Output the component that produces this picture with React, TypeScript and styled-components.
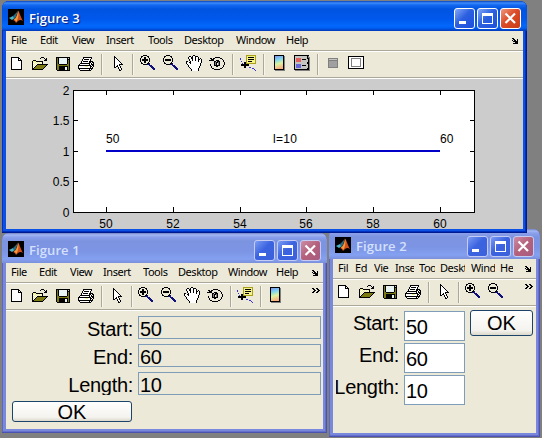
import React from "react";
import styled, { createGlobalStyle } from "styled-components";

const GlobalStyle = createGlobalStyle`
  * { box-sizing: border-box; }
  body { margin: 0; background: #808080; overflow: hidden; }
`;

/* ---------- pixel icons ---------- */

const palette: Record<string, string> = {
  k: "#000000",
  w: "#ffffff",
  o: "#7c7a10",
  y: "#f4f28c",
  n: "#10107c",
  g: "#808080",
  a: "#a0a0a0",
  l: "#c4c4c0",
  b: "#3434d8",
  c: "#e8f4f4",
  d: "#a8a018",
  r: "#e06060",
  p: "#6468d8",
};

const icons: Record<string, string[]> = {
  file: [
    "",
    "",
    "..kkkkkkkk",
    "..kwwwwwwkk",
    "..kwwwwwwkwk",
    "..kwwwwwwkkkk",
    "..kwwwwwwwwwk",
    "..kwwwwwwwwwk",
    "..kwwwwwwwwwk",
    "..kwwwwwwwwwk",
    "..kwwwwwwwwwk",
    "..kwwwwwwwwwk",
    "..kwwwwwwwwwk",
    "..kwwwwwwwwwk",
    "..kkkkkkkkkkk",
  ],
  open: [
    "",
    "",
    ".........kkk",
    "........k...k.k",
    ".............kk",
    ".kkk........kkk",
    "kyyykkkkkkk",
    "kywywywywyk",
    "kwywywywywk",
    "kywywkkkkkkkkkkk",
    "kwywkoooooooook",
    "kywkoooooooook",
    "kwkoooooooook",
    "kkoooooooook",
    "kkkkkkkkkkk",
  ],
  save: [
    "",
    "",
    ".kkkkkkkkkkkkkk",
    ".kokccccccccklk",
    ".kokcccccccckkk",
    ".kokcccccccckok",
    ".kokcccccccckok",
    ".kokcccccccckok",
    ".kokcccccccckok",
    ".kookkkkkkkkook",
    ".kooooooooooook",
    ".kookkkkkkkkkok",
    ".kookkkkkkcckok",
    ".kookkkkkkcckok",
    ".kookkkkkkcckok",
    "..kkkkkkkkkkkkk",
  ],
  print: [
    "",
    "",
    ".....kkkkkkkkk",
    ".....kwwwwwwwk",
    "....kwkkkkkwk",
    "....kwwwwwwwk",
    "...kwkkkkkwkkkk",
    "...kwwwwwwwkkwkk",
    "..kkkkkkkkkkwkwk",
    ".kwwwwwwwwwkwkkk",
    "kkkkkkkkkkkkkwkk",
    "kwwwwwwyyywwkkwk",
    "kwwwwwwwwwwwkwk",
    "kkkkkkkkkkkkkkk",
    ".kwwwwwwwwwkwk",
    "..kkkkkkkkkkk",
  ],
  pointer: [
    "",
    ".....k",
    ".....kk",
    ".....kwk",
    ".....kwwk",
    ".....kwwwk",
    ".....kwwwwk",
    ".....kwwwwwk",
    ".....kwwwwwwk",
    ".....kwwwwkkkk",
    ".....kwwkwk",
    ".....kwkkwwk",
    ".....kk..kwk",
    ".........kwwk",
    "..........kwk",
    "..........kk",
  ],
  zoomIn: [
    "...kkkk",
    ".kk....kk",
    ".k..kk..k",
    "k...kk...k",
    "k.kkkkkk.k",
    "k.kkkkkk.k",
    "k...kk...k",
    ".k..kk..k",
    ".kk....kkn",
    "...kkkknnn",
    ".........nnn",
    "..........nnn",
    "...........nnn",
    "............nnn",
    ".............nn",
  ],
  zoomOut: [
    "...kkkk",
    ".kk....kk",
    ".k......k",
    "k........k",
    "k.kkkkkk.k",
    "k.kkkkkk.k",
    "k........k",
    ".k......k",
    ".kk....kkn",
    "...kkkknnn",
    ".........nnn",
    "..........nnn",
    "...........nnn",
    "............nnn",
    ".............nn",
  ],
  hand: [
    ".......kk",
    "...kk.kwwkkk",
    "..kwwkkwwkwwk",
    "..kwwkkwwkwwk.k",
    "...kwwkwwkwwkkwk",
    "...kwwkwwkwwkwwk",
    "kk..kwwwwwwwkwwk",
    "kwwkkwwwwwwwwwwk",
    "kwwwkwwwwwwwwwk",
    ".kwwwwwwwwwwwwk",
    "..kwwwwwwwwwwwk",
    "..kwwwwwwwwwwk",
    "...kwwwwwwwwwk",
    "....kwwwwwwwk",
    ".....kwwwwwwk",
    ".....kwwwwwwk",
  ],
  rotate: [
    "",
    "",
    "......kkkkk",
    ".kk.kk.....kk",
    "..kkk........k",
    "kkkkk..kkk....k",
    ".....kklkkk...k",
    ".....kgkkgk....k",
    ".....kgk.gk....k",
    ".k...kgk.gk....k",
    ".k...kkkkkk...k",
    "..k....kk.....k",
    "..k..........k",
    "...kk......kk",
    ".....kkkkkk",
  ],
  cursor: [
    "......dddddddddd",
    "......dyyyyyyyyd",
    "......dykkkkkkyd",
    "b.....dyyyyyyyyd",
    "b.....dykkkkkkyd",
    "......dyyyyyyyyd",
    ".b....dykkkkyyyd",
    "....kkdyyyyyyyyd",
    "..b.kkdddddddddd",
    ".kkkkkkkk",
    ".kkkkkkkk",
    "....kk",
    "....kk...bb",
    "............bb",
    "..............b",
    "...............b",
  ],
  legend: [
    "kkkkkkkkkkkkkkk",
    "kllllllllllllkg",
    "kllllllllllllkgg",
    "klrrrrrllllllkkg",
    "klrrrrrlkkkkllkg",
    "klrrrrrlllllllkg",
    "klrrrrrlllllllkg",
    "kllllllllllllkkg",
    "kllllllllllllkkg",
    "klppppplllllllkg",
    "klppppplkkkkllkg",
    "klppppplllllllkg",
    "klppppplllllllkg",
    "kllllllllllllkkg",
    "kkkkkkkkkkkkkkkg",
    ".ggggggggggggggg",
  ],
  hide: [
    "",
    "",
    "",
    "...gggggggggg",
    "...gllllllllg",
    "...gggggggggg",
    ...Array(6).fill("...gaaaaaaaag"),
    "...gggggggggg",
  ],
  show: [
    "",
    "kkkkkkkkkkkkkkkk",
    "kwwwwwwwwwwwwwwk",
    "kwwggggggggggwwk",
    ...Array(7).fill("kwwgwwwwwwwwgwwk"),
    "kwwggggggggggwwk",
    "kwwwwwwwwwwwwwwk",
    "kkkkkkkkkkkkkkkk",
  ],
  dock: ["kk", ".kk..k", "k.kk.k", ".kkkkk", "...kkk", ".kkkkk"],
  more: ["kk..kk", ".kk..kk", "..kk..kk", ".kk..kk", "kk..kk"],
};

const IconSvg = styled.svg`
  display: block;
  flex: none;
`;

const PixelIcon = ({ name, size = 16 }: { name: string; size?: number }) => (
  <IconSvg width={size} height={size} viewBox={`0 0 ${size} ${size}`} shapeRendering="crispEdges">
    {icons[name].flatMap((row, y) =>
      row.split("").map((c, x) =>
        c === "." ? null : <rect key={`${x}-${y}`} x={x} y={y} width={1} height={1} fill={palette[c]} />
      )
    )}
  </IconSvg>
);

const ColorbarIcon = () => (
  <IconSvg width="16" height="16" viewBox="0 0 16 16">
    <defs>
      <linearGradient id="bar" x1="0" y1="0" x2="0.2" y2="1">
        <stop offset="0" stopColor="#8088ec" />
        <stop offset="0.35" stopColor="#7cd4f0" />
        <stop offset="0.65" stopColor="#dcf4a0" />
        <stop offset="1" stopColor="#f8b080" />
      </linearGradient>
    </defs>
    <rect x="4" y="1" width="10" height="15" fill="#808080" />
    <rect x="3.5" y="0.5" width="9" height="14" fill="url(#bar)" stroke="#000" />
  </IconSvg>
);

const AppIcon = () => (
  <IconSvg width="16" height="16" viewBox="0 0 16 16">
    <rect width="16" height="16" fill="#000" />
    <path d="M1 9 L5 7 L7 9 L4 11Z" fill="#4cb4c8" />
    <path d="M5 7 L8.5 3.5 L10 1.5 L8 8 L6 10Z" fill="#286c84" />
    <path d="M10 1.5 C11.5 3 13 9 15 12 C12.5 10 10.5 11 8 14 C7 12 6.5 11.5 5 11 C8 10 9 6 10 1.5Z" fill="#d0501c" />
    <path d="M10.3 2 C10.8 5 10.4 9 8.5 12.8 C7.8 11.6 7 11 5.8 11 C8.7 9 9.4 6 10.3 2Z" fill="#f49c3c" />
  </IconSvg>
);

/* ---------- window frame ---------- */

const Desktop = styled.main`
  position: relative;
  width: 542px;
  height: 438px;
  overflow: hidden;
  background: #808080;
  color: #000;
`;

const Frame = styled.section<{
  $x: number; $y: number; $w: number; $h: number; $z: number; $active?: boolean;
}>`
  position: absolute;
  left: ${(p) => p.$x}px;
  top: ${(p) => p.$y}px;
  width: ${(p) => p.$w}px;
  height: ${(p) => p.$h}px;
  z-index: ${(p) => p.$z};
  display: flex;
  flex-direction: column;
  padding: 0 4px 4px;
  border-radius: 7px 7px 0 0;
  background: ${(p) => (p.$active ? "#0c50e4" : "#7a88dc")};
  box-shadow: inset -1px -1px 0 ${(p) => (p.$active ? "#001a90" : "#4a54b0")},
    inset 1px 0 0 ${(p) => (p.$active ? "#0830c0" : "#5c68bc")},
    inset -2px -2px 0 ${(p) => (p.$active ? "#0030c0" : "#6470cc")};
`;

const TitleBar = styled.header<{ $active?: boolean }>`
  flex: none;
  height: 30px;
  margin: 0 -4px;
  padding: 2px 6px 0;
  display: flex;
  align-items: center;
  border-radius: 7px 7px 0 0;
  background: ${(p) =>
    p.$active
      ? "linear-gradient(#0844c0 0, #3c8cfc 2px, #1468f0 4px, #0054e0 8px, #0058ec 18px, #0468fc 25px, #0060f4 27px, #0038b8 30px)"
      : "linear-gradient(#7484c8 0, #a4b8f4 2px, #8ca0ec 4px, #7c94e0 8px, #7c94e4 18px, #84a0f0 26px, #7c90dc 30px)"};
`;

const Title = styled.h1<{ $active?: boolean }>`
  flex: 1;
  margin: 0 0 0 5px;
  padding-top: 2px;
  font: 600 13px/18px "Open Sans", "Noto Sans", sans-serif;
  letter-spacing: 0.1px;
  color: ${(p) => (p.$active ? "#fff" : "#d4e0fc")};
  text-shadow: ${(p) => (p.$active ? "1px 1px 1px #0c1c80" : "none")};
`;

const Controls = styled.div`
  display: flex;
  gap: 2px;
  padding-top: 3px;
`;

const Control = styled.button<{ $close?: boolean; $active?: boolean }>`
  width: 21px;
  height: 21px;
  padding: 0;
  border: 1px solid ${(p) => (p.$active ? "#fff" : "#c4ccf4")};
  border-radius: 3px;
  background: ${(p) =>
    p.$close
      ? p.$active
        ? "linear-gradient(135deg, #f09880, #dc4c28 45%, #c83c14)"
        : "linear-gradient(135deg, #cc8ca4, #b4607c 50%, #a85c80)"
      : p.$active
      ? "linear-gradient(135deg, #84a8f8, #2c60e0 45%, #1c50dc)"
      : "linear-gradient(135deg, #7c9cf4, #3c64e0 45%, #3c60dc)"};
`;

const WindowControls = ({ active }: { active?: boolean }) => (
  <Controls>
    <Control $active={active} aria-label="Minimize">
      <IconSvg width="19" height="19"><rect x="4" y="12" width="7" height="3" fill="#fff" /></IconSvg>
    </Control>
    <Control $active={active} aria-label="Maximize">
      <IconSvg width="19" height="19">
        <rect x="4.5" y="4.5" width="10" height="10" fill="none" stroke="#fff" />
        <rect x="4" y="4" width="11" height="3" fill="#fff" />
      </IconSvg>
    </Control>
    <Control $active={active} $close aria-label="Close">
      <IconSvg width="19" height="19">
        <path d="M4.5 4.5 L14 14 M14 4.5 L4.5 14" stroke="#fff" strokeWidth="2.2" />
      </IconSvg>
    </Control>
  </Controls>
);

const Client = styled.div`
  flex: 1;
  min-height: 0;
  display: flex;
  flex-direction: column;
  background: #ece9d8;
  overflow: hidden;
`;

const Bar = styled.div<{ $h: number }>`
  flex: none;
  display: flex;
  align-items: flex-start;
  height: ${(p) => p.$h}px;
  border-bottom: 1px solid #aca899;
  box-shadow: 0 1px 0 #fff;
  margin-bottom: 1px;
`;

const MenuBar = styled(Bar)`
  padding-left: 5px;
`;

const MenuItem = styled.span<{ $w: number; $clip?: number }>`
  flex: none;
  width: ${(p) => p.$clip ?? p.$w}px;
  margin-right: ${(p) => (p.$clip ? p.$w - p.$clip : 0)}px;
  overflow: hidden;
  white-space: nowrap;
  font: 400 11px/18px "Noto Sans", sans-serif;
  letter-spacing: -0.45px;
`;

const BarEnd = styled.span<{ $right: number; $top: number }>`
  margin: ${(p) => p.$top}px ${(p) => p.$right}px 0 auto;
`;

const Tool = styled.span`
  flex: none;
  width: 23px;
  padding: 3px 0 0 3px;
`;

const Divider = styled.i<{ $w: number }>`
  flex: none;
  width: ${(p) => p.$w}px;
  height: 21px;
  margin-top: 2px;
  &::before {
    content: "";
    display: block;
    width: 2px;
    height: 100%;
    margin-left: 3px;
    background: linear-gradient(90deg, #aca899 50%, #f8f6ec 50%);
  }
`;

const Toolbar = ({ tools, gap, more }: { tools: string[]; gap: number; more?: boolean }) => (
  <Bar $h={26}>
    {tools.map((t, i) =>
      t === "|" ? (
        <Divider key={i} $w={gap} />
      ) : (
        <Tool key={i}>{t === "colorbar" ? <ColorbarIcon /> : <PixelIcon name={t} />}</Tool>
      )
    )}
    {more && <BarEnd $right={3} $top={4}><PixelIcon name="more" size={8} /></BarEnd>}
  </Bar>
);

type Item = [label: string, width: number, clip?: number];

const FigureWindow = (props: {
  title: string; x: number; y: number; w: number; h: number; z: number; active?: boolean;
  items: Item[]; tools: string[]; gap: number; more?: boolean; children: React.ReactNode;
}) => (
  <Frame $x={props.x} $y={props.y} $w={props.w} $h={props.h} $z={props.z} $active={props.active}>
    <TitleBar $active={props.active}>
      <AppIcon />
      <Title $active={props.active}>{props.title}</Title>
      <WindowControls active={props.active} />
    </TitleBar>
    <Client>
      <MenuBar $h={20}>
        {props.items.map(([label, w, clip]) => (
          <MenuItem key={label} $w={w} $clip={clip}>{label}</MenuItem>
        ))}
        <BarEnd $right={4} $top={7}><PixelIcon name="dock" size={7} /></BarEnd>
      </MenuBar>
      <Toolbar tools={props.tools} gap={props.gap} more={props.more} />
      {props.children}
    </Client>
  </Frame>
);

/* ---------- plot ---------- */

const PlotArea = styled.div`
  flex: 1;
  background: #ccc;
`;

const PlotSvg = styled.svg`
  display: block;
  font: 12px "Liberation Sans", Arial, sans-serif;
`;

const xTicks: [number, string][] = [[106, "50"], [173, "52"], [240, "54"], [306, "56"], [373, "58"], [440, "60"]];
const yTicks: [number, string][] = [[90, "2"], [120, "1.5"], [151, "1"], [181, "0.5"], [212, "0"]];

const Plot = () => (
  <PlotArea>
    <PlotSvg width="517" height="150" viewBox="6 79 517 150">
      <rect x="73.5" y="90.5" width="401" height="122" fill="#fff" stroke="#000" shapeRendering="crispEdges" />
      {xTicks.map(([x, t]) => (
        <g key={t}>
          <path d={`M${x + 0.5} 90v5M${x + 0.5} 212v-5`} stroke="#000" shapeRendering="crispEdges" />
          <text x={x} y="227.5" textAnchor="middle">{t}</text>
        </g>
      ))}
      {yTicks.map(([y, t]) => (
        <g key={t}>
          <path d={`M73 ${y + 0.5}h5M475 ${y + 0.5}h-5`} stroke="#000" shapeRendering="crispEdges" />
          <text x="69.5" y={y + 4.5} textAnchor="end">{t}</text>
        </g>
      ))}
      <path d="M106 151H440" stroke="#0000c8" strokeWidth="2" />
      <text x="106" y="143">50</text>
      <text x="273" y="143" letterSpacing="0.3">l=10</text>
      <text x="440" y="143">60</text>
    </PlotSvg>
  </PlotArea>
);

/* ---------- forms ---------- */

const Form = styled.div<{ $pad: string; $cols: string; $row: number; $rowGap: number }>`
  display: grid;
  grid-template-columns: ${(p) => p.$cols};
  grid-auto-rows: ${(p) => p.$row}px;
  row-gap: ${(p) => p.$rowGap}px;
  column-gap: 5px;
  padding: ${(p) => p.$pad};
  font: 20px/23px "Liberation Sans", Arial, sans-serif;
`;

const Label = styled.label<{ $shift: number }>`
  display: flex;
  justify-content: flex-end;
  overflow: hidden;
  letter-spacing: -0.3px;
  padding-top: ${(p) => p.$shift}px;
`;

const Field = styled.output<{ $bg: string; $shift: number }>`
  border: 1px solid #7f9db9;
  background: ${(p) => p.$bg};
  padding: ${(p) => p.$shift}px 0 0 1px;
  line-height: 21px;
  letter-spacing: -0.3px;
`;

const OkButton = styled.button<{ $w: number; $h: number; $m: string }>`
  width: ${(p) => p.$w}px;
  height: ${(p) => p.$h}px;
  margin: ${(p) => p.$m};
  padding: 0;
  border: 1px solid #1c4468;
  border-radius: 3px;
  background: linear-gradient(#fff, #f4f3ee 80%, #dcd8cc);
  color: #000;
  font: 20px/20px "Liberation Sans", Arial, sans-serif;
`;

const rows = [["Start:", "50"], ["End:", "60"], ["Length:", "10"]];

const baseTools = ["file", "open", "save", "print", "|", "pointer", "|", "zoomIn", "zoomOut"];
const midTools = [...baseTools, "hand", "rotate", "|", "cursor", "|", "colorbar"];

export default function App() {
  return (
    <Desktop>
      <GlobalStyle />
      <FigureWindow
        title="Figure 3" x={2} y={1} w={525} h={232} z={3} active gap={8}
        items={[["File", 29], ["Edit", 32], ["View", 34], ["Insert", 42], ["Tools", 36], ["Desktop", 52], ["Window", 50], ["Help", 24]]}
        tools={[...midTools, "legend", "|", "hide", "show"]}
      >
        <Plot />
      </FigureWindow>

      <FigureWindow
        title="Figure 1" x={2} y={233} w={325} h={200} z={1} gap={7} more
        items={[["File", 28], ["Edit", 31], ["View", 33], ["Insert", 40], ["Tools", 35], ["Desktop", 50], ["Window", 48], ["Help", 24]]}
        tools={midTools}
      >
        <Form $pad="5px 0 0" $cols="127px 183px" $row={23} $rowGap={5}>
          {rows.map(([l, v]) => (
            <React.Fragment key={l}>
              <Label $shift={2}>{l}</Label>
              <Field $bg="#ece9d8" $shift={2}>{v}</Field>
            </React.Fragment>
          ))}
        </Form>
        <OkButton $w={120} $h={21} $m="6px 0 0 6px">OK</OkButton>
      </FigureWindow>

      <FigureWindow
        title="Figure 2" x={329} y={229} w={211} h={208} z={2} gap={7} more
        items={[["Fil", 17, 12], ["Ed", 19, 13], ["Vie", 21, 15], ["Inse", 24, 19], ["Too", 21, 16], ["Deskt", 31, 25], ["Wind", 29, 24], ["He", 15, 13]]}
        tools={baseTools}
      >
        <Form $pad="4px 0 0 3px" $cols="63px 61px 63px" $row={30} $rowGap={2}>
          {rows.map(([l, v], i) => (
            <React.Fragment key={l}>
              <Label $shift={1}>{l}</Label>
              <Field $bg="#fff" $shift={5}>{v}</Field>
              {i === 0 ? <OkButton $w={63} $h={26} $m="-1px 0 0">OK</OkButton> : <span />}
            </React.Fragment>
          ))}
        </Form>
      </FigureWindow>
    </Desktop>
  );
}
